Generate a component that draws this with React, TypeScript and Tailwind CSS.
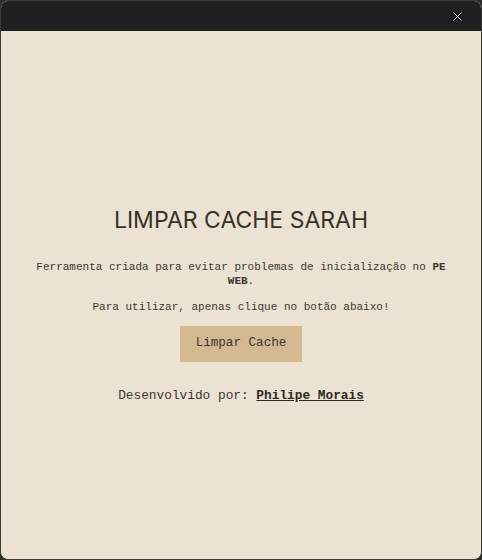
import { X } from "lucide-react"

const mono = { fontFamily: '"Liberation Mono", "DejaVu Sans Mono", monospace' }

const App = () => {
  return (
    <div className="w-[482px] h-[560px] bg-[#2b2b2b]">
      <div className="w-full h-full flex flex-col rounded-lg overflow-hidden border border-[#3a3a3a] bg-[#ebe2d4]">
        <div className="h-[30px] bg-[#202020] flex items-center justify-end pr-[16px] shrink-0">
          <X className="w-[15px] h-[15px] text-white" strokeWidth={1.3} />
        </div>

        <div className="flex-1 flex flex-col items-center justify-center px-[26px] pt-[22px] text-[#3b3730]">
          <h1
            className="text-[23px] leading-none text-[#3a3127] mb-[28px]"
            style={{ fontFamily: 'Inter, "Noto Sans", sans-serif' }}
          >
            LIMPAR CACHE SARAH
          </h1>
          <p className="text-[11px] leading-[14px] text-center mb-[12px]" style={mono}>
            Ferramenta criada para evitar problemas de inicialização no <b>PE WEB</b>.
          </p>
          <p className="text-[11px] leading-[14px] text-center mb-[12px]" style={mono}>
            Para utilizar, apenas clique no botão abaixo!
          </p>
          <button
            className="bg-[#d4b892] h-[36px] px-[16px] text-[12.6px] text-[#3b3730] mb-[26px]"
            style={mono}
          >
            Limpar Cache
          </button>
          <p className="text-[12.8px] leading-[16px]" style={mono}>
            Desenvolvido por: <a className="font-bold underline text-[#2f2a24]">Philipe Morais</a>
          </p>
        </div>
      </div>
    </div>
  )
}

export default App
